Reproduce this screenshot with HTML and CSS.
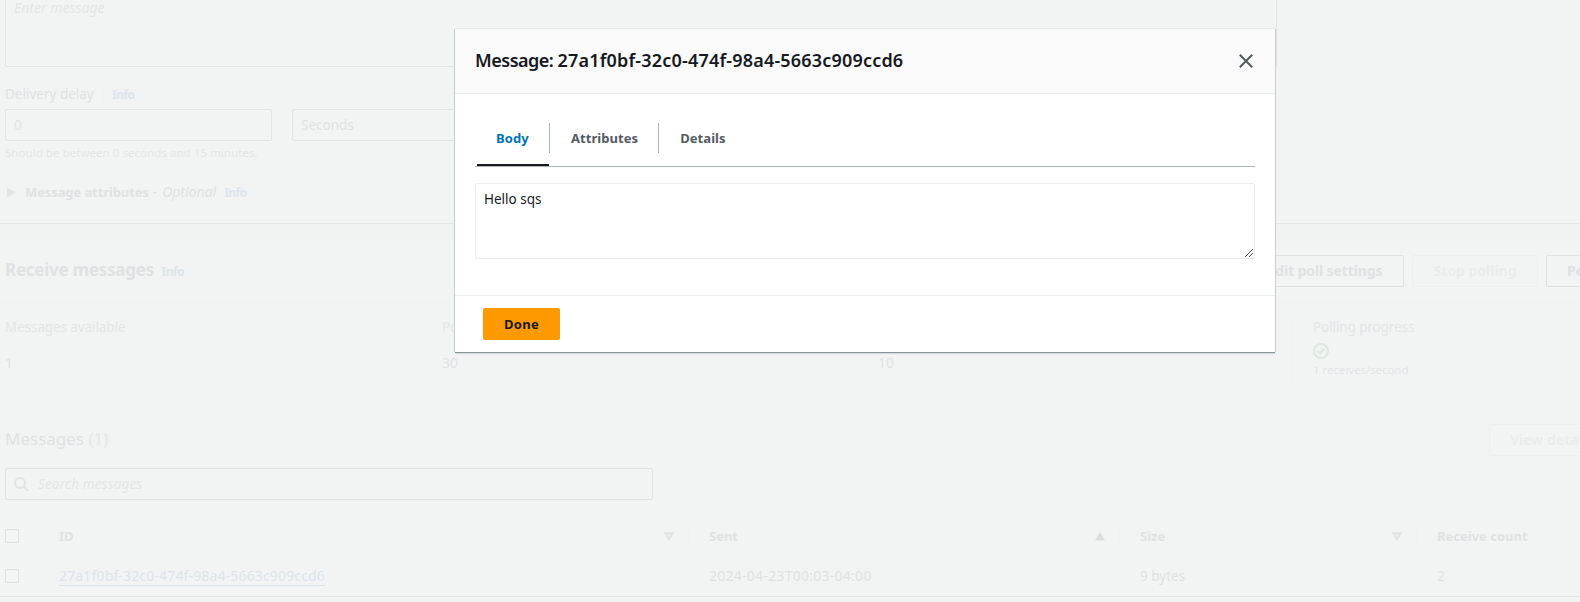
FILE: index.html
```html
<!DOCTYPE html>
<html lang="en">
<head>
<meta charset="utf-8">
<title>Send and receive messages</title>
<link rel="stylesheet" href="styles.css">
</head>
<body>
<div class="page">
  <section class="send">
    <div class="message-box">Enter message</div>
    <div class="label-row"><span class="label">Delivery delay</span><span class="info info-split">Info</span></div>
    <div class="fields">
      <div class="field">0</div>
      <div class="field">Seconds</div>
    </div>
    <div class="hint">Should be between 0 seconds and 15 minutes.</div>
    <div class="expander">
      <svg width="9" height="11" viewBox="0 0 9 11"><path d="M0 0.5L8.5 5.5L0 10.5Z" fill="#e2e4e4"/></svg>
      <b>Message attributes</b><span class="dash">-</span><i>Optional</i><span class="info">Info</span>
    </div>
  </section>

  <section class="receive">
    <header class="receive-head">
      <h2>Receive messages</h2><span class="info">Info</span>
      <div class="actions">
        <span class="btn edit">Edit poll settings</span>
        <span class="btn stop off">Stop polling</span>
        <span class="btn poll">Poll for messages</span>
      </div>
    </header>
    <div class="stats">
      <div class="stat"><span class="stat-name">Messages available</span><span class="stat-value">1</span></div>
      <div class="stat second"><span class="stat-name">Polling duration</span><span class="stat-value">30</span></div>
      <div class="stat"><span class="stat-name">Maximum message count</span><span class="stat-value">10</span></div>
      <div class="stat"><span class="stat-name progress">Polling progress</span>
        <svg class="ok" width="16" height="16" viewBox="0 0 16 16" fill="none" stroke="#dde8dc" stroke-width="2"><circle cx="8" cy="8" r="7"/><path d="M4.5 8L7 10.3L11.3 5.8"/></svg>
        <span class="rate">1 receives/second</span></div>
    </div>
    <div class="list-head"><h3>Messages <span>(1)</span></h3><span class="btn view off">View details</span></div>
    <div class="search">
      <svg width="15" height="15" viewBox="0 0 15 15" fill="none" stroke="#e1e3e3" stroke-width="2"><circle cx="6" cy="6" r="5"/><path d="M9.5 9.5L14 14"/></svg>
      <span>Search messages</span>
    </div>
    <div class="row head">
      <div class="cell"><span class="check"></span></div>
      <div class="cell">ID<svg class="sort" width="10" height="9" viewBox="0 0 10 9"><path d="M1.4 1.2H8.6L5 7.2Z" fill="none" stroke="#dfe1e2" stroke-width="2"/></svg></div>
      <div class="cell">Sent<svg class="sort" width="10" height="9" viewBox="0 0 10 9"><path d="M0 8.5H10L5 0Z" fill="#dbdddd"/></svg></div>
      <div class="cell">Size<svg class="sort" width="10" height="9" viewBox="0 0 10 9"><path d="M1.4 1.2H8.6L5 7.2Z" fill="none" stroke="#dfe1e2" stroke-width="2"/></svg></div>
      <div class="cell">Receive count</div>
    </div>
    <div class="row data">
      <div class="cell"><span class="check"></span></div>
      <div class="cell"><a class="link">27a1f0bf-32c0-474f-98a4-5663c909ccd6</a></div>
      <div class="cell date">2024-04-23T00:03-04:00</div>
      <div class="cell">9 bytes</div>
      <div class="cell">2</div>
    </div>
  </section>
</div>

<div class="modal">
  <header class="modal-head">
    <h1>Message: <span>27a1f0bf-32c0-474f-98a4-5663c909ccd6</span></h1>
    <svg width="14" height="14" viewBox="0 0 14 14" stroke="#545b64" stroke-width="2"><path d="M0.8 0.8L13.2 13.2M13.2 0.8L0.8 13.2"/></svg>
  </header>
  <div class="modal-body">
    <nav class="tabs">
      <div class="tab active"><span>Body</span></div>
      <div class="tab"><span>Attributes</span></div>
      <div class="tab"><span>Details</span></div>
    </nav>
    <div class="content">
      <span>Hello sqs</span>
      <svg class="grip" width="8" height="8" viewBox="0 0 8 8" stroke="#444" stroke-width="0.9"><path d="M0 8L8 0M4 8L8 4"/></svg>
    </div>
  </div>
  <footer class="modal-foot"><span class="done">Done</span></footer>
</div>
</body>
</html>
```
FILE: styles.css
```css
* { box-sizing: border-box; }
body {
  margin: 0;
  width: 1580px;
  height: 602px;
  overflow: hidden;
  position: relative;
  background: #f1f3f3;
  color: #dfe1e2;
  font: 13.5px/20px "Noto Sans", sans-serif;
  white-space: nowrap;
}
h1, h2, h3 { margin: 0; }
svg { display: block; flex: none; }
.page { width: 1580px; height: 602px; overflow: hidden; }

.send {
  height: 224px;
  padding-left: 5px;
  background: #f2f4f4;
  border-bottom: 1px solid #e5e7e7;
}
.message-box {
  width: 1272px;
  height: 67px;
  padding: 0 8px;
  line-height: 15px;
  font-size: 14px;
  font-style: italic;
  color: #e4e6e6;
  border: 1px solid #e3e5e5;
  border-top: 0;
  border-radius: 0 0 2px 2px;
}
.label-row {
  display: flex;
  align-items: center;
  height: 18px;
  margin-top: 18px;
}
.label { width: 98px; }
.info {
  color: #dae5ed;
  font-size: 12px;
  font-weight: 700;
  letter-spacing: -.5px;
  padding-top: 1px;
}
.info-split { padding-left: 8px; border-left: 1px solid #f0f2f2; line-height: 18px; }
.fields { display: flex; gap: 20px; margin-top: 6px; }
.field {
  width: 267px;
  height: 32px;
  padding: 0 8px;
  line-height: 31px;
  border: 1px solid #e3e5e5;
  border-radius: 2px;
}
.hint { height: 24px; line-height: 24px; font-size: 11.6px; color: #e4e6e6; }
.expander { display: flex; align-items: center; height: 20px; margin-top: 17px; padding-left: 2px; }
.expander b { margin-left: 9px; font-size: 13px; letter-spacing: -.1px; }
.expander .dash { margin: 0 5px 0 4px; }
.expander i { font-size: 14px; }
.expander .info { margin-left: 8px; }

.receive {
  margin-top: 15px;
  height: 358px;
  background: #f2f4f4;
  border-top: 1px solid #f0f2f2;
  border-bottom: 1px solid #e5e7e7;
}
.receive-head {
  display: flex;
  align-items: center;
  height: 64px;
  padding: 0 0 2px 5px;
  border-bottom: 1px solid #f0f2f2;
}
.receive-head h2 { font-size: 17px; width: 156.5px; letter-spacing: -.25px; padding-bottom: 1px; }
.receive-head .info { padding-top: 3px; }
.actions { display: flex; gap: 8px; margin-left: auto; margin-right: -90px; }
.btn {
  height: 32px;
  line-height: 30px;
  padding: 0 20px;
  text-align: center;
  font-size: 14px;
  font-weight: 700;
  border: 1px solid #e0e2e2;
  border-radius: 2px;
}
.off { color: #eaecec; border-color: #edefef; }
.edit { width: 158px; letter-spacing: -.12px; }
.stop { width: 126px; }
.poll { width: 124px; text-align: left; overflow: hidden; }

.stats { display: flex; height: 104px; padding-top: 12px; }
.stat {
  width: 437px;
  height: 72px;
  padding-left: 19px;
  border-left: 1px solid #f0f2f2;
  flex: none;
}
.stat:first-child { width: 421px; padding-left: 5px; border-left: 0; }
.stat:nth-child(3) { width: 434px; }
.stat.second { padding-left: 20px; }
.stat-name { display: block; height: 22px; line-height: 22px; color: #e3e5e6; letter-spacing: -.1px; }
.stat-value { display: block; margin-top: 15px; line-height: 20px; font-size: 14px; }
.progress { padding-left: 1px; }
.ok { margin-top: 5px; margin-left: 1px; }
.rate { display: block; padding-left: 1px; line-height: 22px; font-size: 11.4px; color: #e3e5e6; }

.list-head { display: flex; align-items: center; height: 60px; padding-left: 5px; padding-top: 3px; }
.list-head h3 { font-size: 17px; font-weight: 400; padding-bottom: 2px; }
.list-head h3 span { color: #e4e6e6; }
.view { margin-left: auto; margin-right: -34px; width: 125px; }
.search {
  display: flex;
  align-items: center;
  gap: 9px;
  width: 648px;
  height: 32px;
  margin-left: 5px;
  padding-left: 8px;
  border: 1px solid #e0e2e2;
  border-radius: 2px;
  color: #e3e5e5;
  font-style: italic;
  letter-spacing: .15px;
}
.row { display: grid; grid-template-columns: 38px 650px 431px 297px 164px; align-items: center; }
.head {
  margin-top: 16px;
  height: 40px;
  border-top: 1px solid #f0f2f2;
  border-bottom: 1px solid #f0f2f2;
  font-size: 13px;
  font-weight: 700;
}
.data { height: 40px; }
.cell { display: flex; align-items: center; padding-left: 21px; }
.cell:first-child { padding-left: 5px; }
.head .cell { height: 20px; border-left: 1px solid #f0f2f2; padding-left: 20px; }
.head .cell:first-child { border-left: 0; padding-left: 5px; }
.check { width: 14px; height: 14px; border: 1px solid #dfe1e1; border-radius: 2px; }
.sort { margin-left: auto; margin-right: 14px; }
.link { font-size: 14px; line-height: 19px; letter-spacing: .155px; color: #dae5ed; border-bottom: 1px solid #dae5ed; }
.date { font-size: 14px; letter-spacing: .26px; }

.modal {
  position: absolute;
  left: 455px;
  top: 29px;
  width: 820px;
  height: 323px;
  background: #fff;
  box-shadow: 0 1px 0 #879596, -1px 0 0 #c5cccd, 1px 0 0 #c9cfd0, 0 -1px 0 #e8eaea, 0 2px 1px #d5dbdb;
  color: #16191f;
}
.modal-head {
  display: flex;
  align-items: center;
  justify-content: space-between;
  height: 65px;
  padding: 0 22px 0 20px;
  background: #fafafa;
  border-bottom: 1px solid #eaeded;
}
.modal-head h1 { font-size: 18px; line-height: 24px; font-weight: 600; letter-spacing: -.5px; padding-bottom: 3px; }
.modal-head h1 span { letter-spacing: .19px; }
.modal-body { height: 202px; padding: 20px 20px 0; border-bottom: 1px solid #eaeded; }
.tabs { display: flex; height: 53px; padding-left: 2px; border-bottom: 1px solid #aab7b8; }
.tab { height: 52px; padding-top: 9px; color: #545b64; font-size: 13px; font-weight: 700; letter-spacing: .06px; }
.tab span { display: block; height: 30px; line-height: 30px; padding: 0 20px 0 21px; border-right: 1px solid #aab7b8; }
.tab:last-child span { border-right: 0; }
.active { width: 73px; color: #0073bb; position: relative; }
.active span { padding: 0 0 0 19px; }
.active::after { content: ""; position: absolute; left: 0; bottom: 0; width: 72px; height: 2px; background: #16191f; }
.content {
  position: relative;
  height: 76px;
  margin-top: 16px;
  padding: 5px 8px;
  border: 1px solid #eaeded;
  border-radius: 2px;
}
.grip { position: absolute; right: 1px; bottom: 1px; }
.modal-foot { padding: 12px 28px; }
.done {
  display: block;
  width: 77px;
  height: 32px;
  line-height: 32px;
  text-align: center;
  background: #f90;
  border-radius: 2px;
  font-size: 13px;
  font-weight: 700;
  letter-spacing: .25px;
}
```
